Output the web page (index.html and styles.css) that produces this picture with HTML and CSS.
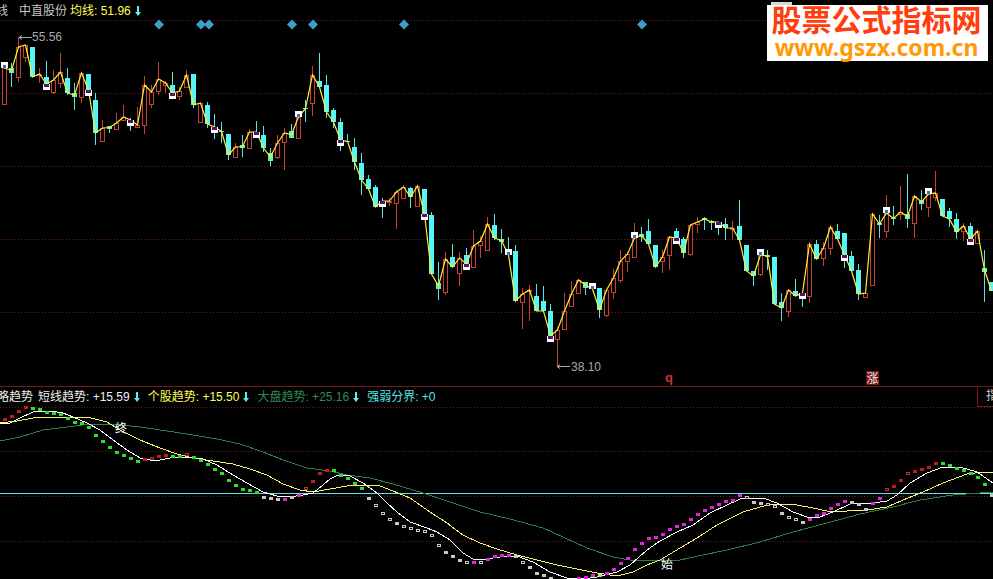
FILE: index.html
```html
<!DOCTYPE html>
<html lang="zh-CN">
<head>
    <meta charset="UTF-8">
    <title>股票公式指标网</title>
    <link rel="stylesheet" href="styles.css">
</head>
<body>
    <div class="main-pane">
        <svg id="kline" class="chart" width="993" height="386" viewBox="0 0 993 386"></svg>

        <div class="legend">
            <span class="clipped">线</span>
            <span class="stock-name">中直股份</span>
            <span class="item yellow">
                <span>均线: 51.96</span>
                <svg class="arrow" viewBox="0 0 6 10"><path d="M2 0h2v6h2l-3 4-3-4h2z"/></svg>
            </span>
        </div>

        <div class="logo">
            <div class="logo-title">股票公式指标网</div>
            <div class="logo-url">www.gszx.com.cn</div>
        </div>
    </div>

    <div class="sub-pane">
        <div class="legend-row">
            <span class="white cut-name">略趋势</span>
            <span class="item white">
                <span>短线趋势: +15.59</span>
                <svg class="arrow" viewBox="0 0 6 10"><path d="M2 0h2v6h2l-3 4-3-4h2z"/></svg>
            </span>
            <span class="item yellow">
                <span>个股趋势: +15.50</span>
                <svg class="arrow" viewBox="0 0 6 10"><path d="M2 0h2v6h2l-3 4-3-4h2z"/></svg>
            </span>
            <span class="item green">
                <span>大盘趋势: +25.16</span>
                <svg class="arrow" viewBox="0 0 6 10"><path d="M2 0h2v6h2l-3 4-3-4h2z"/></svg>
            </span>
            <span class="item cyan">强弱分界: +0</span>
            <span class="tab">指标</span>
        </div>
        <svg id="trend" class="chart" width="993" height="172" viewBox="0 407 993 172"></svg>
    </div>

    <script src="chart.js"></script>
</body>
</html>
```

FILE: styles.css
```css
body {
    margin: 0;
    width: 993px;
    height: 579px;
    overflow: hidden;
    background-color: #000;
    font-family: "Liberation Sans", "Noto Sans CJK SC", sans-serif;
    font-size: 12px;
    line-height: 14px;
}

.main-pane {
    position: relative;
    height: 386px;
}

.chart {
    display: block;
    overflow: visible;
}

.legend {
    position: absolute;
    top: 4px;
    left: 0;
    display: flex;
    color: #c8c8c8;
    white-space: nowrap;
}

.clipped {
    margin-left: -4px;
}

.stock-name {
    margin-left: 11px;
    margin-right: 3px;
}

.item {
    display: flex;
    align-items: center;
    gap: 4px;
    margin-right: 8px;
}

.arrow {
    width: 6px;
    height: 10px;
    fill: #66e8f0;
}

.white { color: #f0f0f0; }
.yellow { color: #ffff55; }
.green { color: #2e8b57; }
.cyan { color: #55e6e6; }

.logo {
    position: absolute;
    top: 5px;
    left: 767px;
    width: 219px;
    height: 56px;
    padding-right: 2px;
    background-color: #fff;
    text-align: center;
    font-weight: bold;
}

.logo::before {
    content: "";
    position: absolute;
    top: -3px;
    left: 4px;
    width: 21px;
    height: 3px;
    background-color: #d8d8d8;
}

.logo-title {
    font-size: 30px;
    line-height: 32px;
    color: #ff3d0d;
}

.logo-url {
    font-family: "Noto Sans", sans-serif;
    font-size: 23px;
    line-height: 20px;
    color: #ff9a05;
}

.sub-pane {
    height: 192px;
    border-top: 1px solid #7a1616;
}

.legend-row {
    display: flex;
    align-items: center;
    height: 20px;
    white-space: nowrap;
}

.cut-name {
    margin-left: -3px;
    margin-right: 5px;
}

.tab {
    width: 7px;
    height: 19px;
    margin-left: auto;
    padding-left: 8px;
    border-left: 1px solid #7a1616;
    border-bottom: 1px solid #7a1616;
    overflow: hidden;
    color: #c8c8c8;
    line-height: 19px;
}

/* chart.js */
.grid {
    stroke: #701a1a;
    stroke-width: 1;
    stroke-dasharray: 1 2;
}

.wick-up { stroke: #c8402e; }
.wick-down { stroke: #58e4e4; }

.body-up {
    fill: #000;
    stroke: #c8402e;
}

.body-down { fill: #56f6f6; }
.body-small { fill: #66f2b0; }

.price-line {
    fill: none;
    stroke: #ffee33;
    stroke-width: 1.2;
}

.mark-bg { fill: #fff; }
.mark-sell { fill: #5a1070; }
.mark-buy { fill: #2a6ee0; }

.diamond { fill: #3d9ec7; }

.price-label {
    fill: #a8a8a8;
    font-size: 12px;
}

.price-arrow {
    stroke: #a8a8a8;
    fill: none;
}

.flag-q {
    fill: #c83030;
    font-size: 13px;
    font-weight: bold;
}

.flag-bg { fill: #7a1010; }

.flag-text {
    fill: #f0f0f0;
    font-size: 12px;
}

.zero-line {
    stroke: #5fe0e8;
    stroke-width: 1;
}

.line-white, .line-yellow, .line-green {
    fill: none;
    stroke-width: 1;
    shape-rendering: crispEdges;
}

.line-white { stroke: #fff; }
.line-yellow { stroke: #f4f46a; }
.line-green { stroke: #2f7d4f; }

.dot-red { fill: #c81818; }
.dot-green { fill: #2ae02a; }
.dot-mag { fill: #e024e0; }
.dot-gray { fill: #c8c8c8; }
.dot-hollow { fill: #000; stroke: #c8c8c8; }
.dot-hollow-red { fill: #000; stroke: #c83030; }

.tag {
    fill: #fff;
    font-size: 12px;
}
```

FILE: chart.js
```js
const NS = 'http://www.w3.org/2000/svg';

function add(svg, tag, cls, attrs, text) {
    const el = document.createElementNS(NS, tag);
    if (cls) el.setAttribute('class', cls);
    for (const key in attrs) el.setAttribute(key, attrs[key]);
    if (text) el.textContent = text;
    svg.appendChild(el);
    return el;
}

function curve(svg, cls, pts) {
    const d = pts.map(p => p.join(',')).join(' ');
    add(svg, 'polyline', cls, { points: d });
}

// type, high, body top, body bottom, low
const candles = [
    ['u',63,68,104,104],['g',63,68,73,87],['u',37,47,77,82],['u',45,45,57,62],['d',47,47,77,77],
    ['u',68,74,75,83],['d',61,77,84,90],['u',70,80,92,94],['u',53,72,83,88],['d',68,78,93,95],
    ['g',83,93,97,110],['u',72,73,97,103],['d',74,74,90,96],['d',93,100,133,145],['u',120,128,141,141],
    ['g',126,126,129,133],['u',113,123,129,129],['u',105,117,120,120],['d',118,120,120,131],['u',107,125,127,128],
    ['u',76,85,125,134],['u',85,92,104,108],['u',62,79,91,95],['u',81,83,85,93],['d',72,85,93,99],
    ['u',87,91,96,100],['u',70,75,87,88],['d',74,74,105,108],['u',103,103,122,122],['d',102,105,124,128],
    ['d',114,127,127,139],['g',122,131,132,143],['d',134,134,155,160],['u',143,147,157,157],['g',135,145,148,157],
    ['u',129,132,148,148],['d',121,132,132,138],['d',126,135,148,152],['g',148,153,161,166],['u',135,143,157,159],
    ['u',128,133,142,170],['g',124,131,138,138],['u',112,117,138,138],['g',100,108,109,122],['u',66,75,103,116],
    ['d',53,81,87,87],['d',75,85,112,118],['d',108,110,122,128],['d',118,122,140,151],['g',134,141,142,142],
    ['d',138,147,162,170],['d',153,163,180,195],['d',175,179,189,189],['d',185,187,207,207],['d',198,201,201,218],
    ['u',198,201,202,206],['u',190,192,203,229],['u',185,187,198,198],['d',187,188,197,208],['u',185,186,206,206],
    ['d',189,189,214,220],['d',212,215,274,274],['g',262,283,289,300],['u',252,259,292,295],['d',244,257,267,267],
    ['u',252,258,273,286],['d',248,255,264,270],['u',230,246,267,267],['u',236,241,245,258],['u',217,224,250,250],
    ['d',214,225,238,240],['g',229,239,242,253],['d',237,255,255,255],['d',245,251,301,301],['u',288,294,302,329],
    ['u',285,290,291,321],['d',284,296,311,311],['d',286,301,311,311],['d',304,311,336,342],['u',327,330,339,366],
    ['u',293,311,329,329],['u',281,294,306,306],['u',279,280,293,293],['g',282,282,288,295],['d',283,289,289,289],
    ['d',288,288,310,318],['u',290,290,315,317],['u',269,278,292,299],['u',250,261,280,283],['u',252,254,261,272],
    ['u',223,238,257,257],['g',227,234,237,242],['d',219,231,244,244],['d',245,245,267,267],['u',250,257,261,273],
    ['u',236,237,255,270],['d',228,231,238,244],['d',237,239,253,258],['u',225,225,254,256],['u',217,222,224,233],
    ['g',217,218,220,230],['g',220,221,223,230],['d',222,222,222,235],['d',218,224,228,240],['u',221,228,229,240],
    ['d',200,226,240,240],['d',245,245,271,271],['d',271,271,276,286],['u',249,255,274,276],['g',250,255,257,270],
    ['d',257,257,304,304],['d',293,302,308,321],['u',289,290,311,317],['d',279,291,296,296],['d',293,293,293,307],
    ['u',243,244,296,303],['d',240,244,259,259],['u',242,248,258,266],['u',225,227,248,255],['d',224,231,239,239],
    ['d',233,233,255,268],['d',251,256,271,271],['d',264,270,294,300],['u',293,293,297,297],['u',214,214,285,285],
    ['g',215,223,225,238],['u',195,213,231,238],['g',206,218,219,225],['u',186,212,214,220],['g',174,214,219,228],
    ['u',195,196,223,238],['g',190,200,204,210],['u',188,194,207,217],['u',171,193,197,201],['d',199,199,216,216],
    ['d',208,211,219,227],['d',213,219,232,239],['u',223,226,231,241],['d',223,226,239,245],['u',231,231,243,243],
    ['g',250,268,272,302],['d',282,282,291,291]
];

// every sixth candle has a box, these ones sit above the body
const buyMarks = [0, 42, 72, 84, 90, 108, 126, 132];

const kline = document.getElementById('kline');
const candleX = i => 4 + 7 * i;

[20, 93, 166, 239, 312].forEach(y => {
    add(kline, 'line', 'grid', { x1: 0, x2: 993, y1: y + 0.5, y2: y + 0.5 });
});

[159, 201, 209, 292, 313, 404, 642].forEach(x => {
    add(kline, 'path', 'diamond', { d: `M${x} 19.5l5 5-5 5-5-5z` });
});

const closes = [];
candles.forEach((c, i) => {
    const [type, high, top, bottom, low] = c;
    const x = candleX(i);
    const up = type === 'u';
    add(kline, 'line', up ? 'wick-up' : 'wick-down', { x1: x + 0.5, x2: x + 0.5, y1: high, y2: low });
    if (up) {
        add(kline, 'rect', 'body-up', { x: x - 1.5, y: top + 0.5, width: 4, height: Math.max(bottom - top, 1) });
    } else if (bottom > top) {
        add(kline, 'rect', type === 'g' ? 'body-small' : 'body-down', { x: x - 2, y: top, width: 5, height: bottom - top });
    }
    const close = up ? top : type === 'g' ? (top + bottom) / 2 : bottom;
    closes.push([x + 0.5, close]);
});

curve(kline, 'price-line', closes);

candles.forEach((c, i) => {
    if (i % 6 !== 0) return;
    const x = candleX(i);
    const buy = buyMarks.includes(i);
    const y = buy ? c[2] - 6 : c[3];
    add(kline, 'rect', 'mark-bg', { x: x - 3, y: y, width: 7, height: 6 });
    if (buy) {
        add(kline, 'rect', 'mark-buy', { x: x - 1, y: y + 3, width: 3, height: 3 });
    } else {
        add(kline, 'rect', 'mark-sell', { x: x - 2, y: y, width: 5, height: 3 });
    }
});

add(kline, 'path', 'price-arrow', { d: 'M32 37.5H19m3-2l-3 2 3 2' });
add(kline, 'text', 'price-label', { x: 32, y: 41 }, '55.56');
add(kline, 'path', 'price-arrow', { d: 'M570 366.5H557m3-2l-3 2 3 2' });
add(kline, 'text', 'price-label', { x: 571, y: 371 }, '38.10');

add(kline, 'text', 'flag-q', { x: 665, y: 382 }, 'q');
add(kline, 'rect', 'flag-bg', { x: 866, y: 371, width: 13, height: 14 });
add(kline, 'text', 'flag-text', { x: 866.5, y: 382.5 }, '涨');

const trend = document.getElementById('trend');

[407, 451, 496, 541].forEach(y => {
    add(trend, 'line', 'grid', { x1: 0, x2: 993, y1: y + 0.5, y2: y + 0.5 });
});
add(trend, 'line', 'zero-line', { x1: 0, x2: 993, y1: 493.5, y2: 493.5 });

const greenLine = [
    [0,441],[20,437],[43,430],[67,427],[90,424],[113,424],[140,427],[167,431],[193,435],[217,439],[240,444],
    [263,452],[283,460],[307,468],[330,471],[347,475],[370,478],[393,484],[423,493],[453,503],[480,512],
    [510,519],[543,528],[563,537],[587,548],[613,557],[630,560],[660,560],[680,560],[703,555],[727,550],
    [760,542],[793,532],[827,523],[860,514],[893,507],[920,500],[953,495],[993,492]
];

const yellowLine = [
    [0,423],[17,421],[33,418],[50,417],[67,417],[87,417],[107,422],[120,430],[140,440],[160,448],[177,454],
    [193,458],[213,461],[233,464],[250,469],[267,475],[283,484],[300,490],[313,492],[330,489],[347,486],
    [363,485],[380,486],[393,491],[410,498],[430,512],[447,523],[463,535],[480,543],[497,549],[517,555],
    [537,560],[557,565],[577,569],[597,573],[617,576],[633,572],[647,565],[660,560],[680,548],[697,538],
    [717,525],[743,512],[760,507],[773,504],[797,505],[813,508],[827,511],[847,511],[867,510],[887,507],
    [903,500],[923,492],[943,483],[967,474],[983,472],[993,473]
];

const whiteLine = [
    [0,424],[10,423],[20,418],[33,412],[50,411],[63,413],[73,417],[87,423],[100,430],[113,440],[127,450],
    [140,458],[150,460],[160,460],[170,458],[187,457],[203,459],[217,465],[233,475],[247,483],[263,492],
    [277,496],[290,497],[303,495],[313,493],[323,485],[330,479],[338,475],[350,476],[363,483],[377,493],
    [387,503],[397,512],[410,522],[427,528],[437,532],[450,540],[463,553],[473,559],[487,559],[500,557],
    [517,556],[533,562],[550,572],[567,578],[583,579],[597,577],[617,572],[630,565],[647,550],[660,541],
    [677,532],[693,525],[710,513],[727,505],[740,499],[763,498],[777,503],[793,512],[807,517],[820,517],
    [833,512],[850,504],[873,503],[887,501],[897,495],[910,483],[927,473],[943,467],[960,467],[977,472],[993,483]
];

curve(trend, 'line-green', greenLine);
curve(trend, 'line-yellow', yellowLine);
curve(trend, 'line-white', whiteLine);

// one dot per candle: y, kind (r red, g green, m magenta, s grey, h hollow, R hollow red)
const dots = [
    [419,'r'],[416,'r'],[411,'r'],[407,'r'],[408,'g'],[409,'g'],[412,'g'],[413,'g'],[414,'g'],[418,'g'],
    [422,'g'],[423,'g'],[427,'g'],[435,'g'],[441,'g'],[447,'g'],[452,'g'],[455,'g'],[458,'g'],[461,'g'],
    [459,'r'],[458,'R'],[456,'r'],[455,'r'],[456,'g'],[456,'g'],[454,'R'],[457,'g'],[460,'g'],[464,'g'],
    [469,'g'],[473,'g'],[480,'g'],[485,'g'],[489,'g'],[490,'g'],[492,'g'],[497,'s'],[498,'s'],[499,'s'],
    [499,'m'],[497,'s'],[495,'m'],[488,'R'],[481,'r'],[473,'r'],[470,'r'],[470,'g'],[475,'g'],[478,'g'],
    [483,'g'],[488,'g'],[498,'s'],[505,'h'],[513,'h'],[519,'h'],[523,'s'],[526,'h'],[528,'h'],[530,'h'],
    [531,'h'],[535,'h'],[545,'h'],[552,'s'],[556,'s'],[560,'s'],[562,'h'],[562,'m'],[562,'h'],[559,'m'],
    [556,'m'],[555,'m'],[555,'m'],[556,'s'],[562,'h'],[567,'s'],[573,'s'],[575,'s'],[578,'s'],[590,'s'],
    [590,'s'],[590,'s'],[578,'m'],[577,'m'],[575,'m'],[575,'s'],[573,'m'],[569,'m'],[563,'m'],[558,'m'],
    [549,'m'],[543,'m'],[538,'m'],[537,'m'],[534,'m'],[529,'m'],[526,'m'],[524,'m'],[519,'m'],[514,'m'],
    [510,'m'],[507,'m'],[504,'m'],[501,'m'],[500,'m'],[495,'m'],[497,'h'],[502,'s'],[503,'s'],[504,'h'],
    [506,'h'],[513,'s'],[517,'h'],[519,'h'],[522,'s'],[519,'m'],[515,'m'],[513,'m'],[508,'m'],[504,'m'],
    [501,'m'],[502,'s'],[504,'s'],[509,'s'],[503,'m'],[498,'m'],[489,'R'],[486,'r'],[480,'r'],[473,'R'],
    [471,'r'],[469,'r'],[467,'r'],[463,'r'],[463,'g'],[465,'g'],[468,'g'],[470,'g'],[473,'g'],[477,'g'],
    [484,'g'],[495,'s']
];

const dotClass = { r: 'dot-red', g: 'dot-green', m: 'dot-mag', s: 'dot-gray', h: 'dot-hollow', R: 'dot-hollow-red' };

dots.forEach((d, i) => {
    const hollow = d[1] === 'h' || d[1] === 'R';
    const offset = hollow ? 0.5 : 0;
    add(trend, 'rect', dotClass[d[1]], {
        x: candleX(i) - 1 + offset,
        y: d[0] - 1 + offset,
        width: hollow ? 3 : 4,
        height: hollow ? 2 : 3
    });
});

add(trend, 'text', 'tag', { x: 115, y: 433 }, '终');
add(trend, 'text', 'tag', { x: 661, y: 569 }, '始');
```
